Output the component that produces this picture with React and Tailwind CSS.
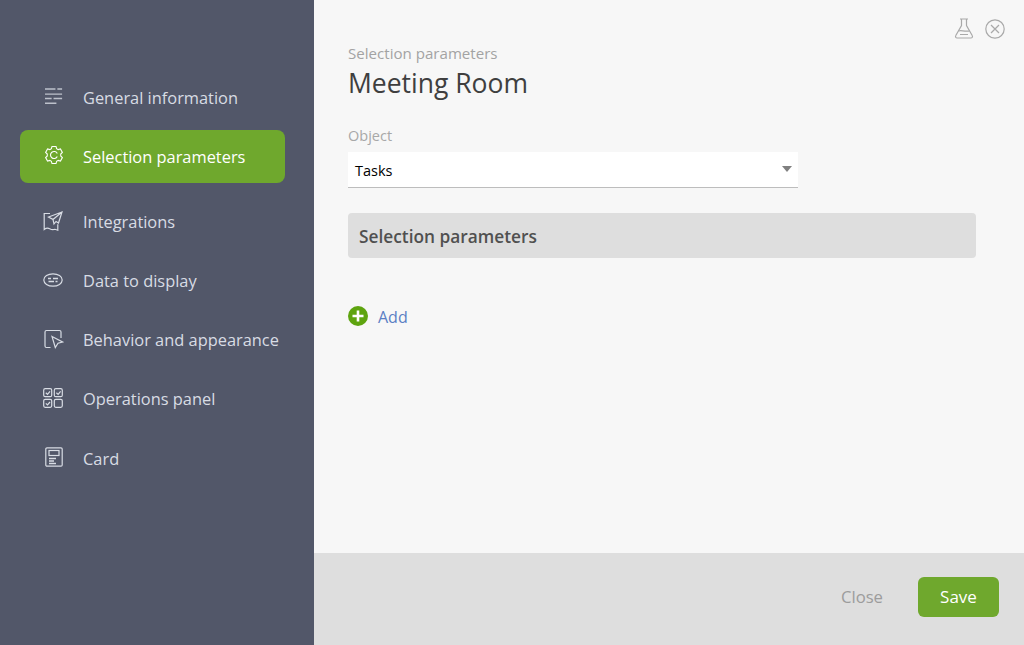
import React from 'react';

const stroke = { fill: 'none', stroke: 'currentColor', strokeWidth: 1.2 };

// sidebar icons, drawn on a 20x20 grid
const GeneralIcon = () => (
  <svg width="20" height="20" viewBox="0 0 20 20" {...stroke}>
    <path d="M0 1.500h11M13 1.500h5M0 7h18M0 11.500h7M9 11.500h9M0 16.500h12" strokeWidth="1.500" opacity="0.8" />
  </svg>
);

const GearIcon = () => (
  <svg width="22" height="22" viewBox="0 0 22 22" {...stroke}>
    <path d="M8.800 1.600h4.400l.7 2.500 1.700 1 2.500-.7 2.100 3.700-1.800 1.800v2.200l1.800 1.800-2.100 3.700-2.500-.7-1.700 1-.7 2.500H8.800l-.7-2.500-1.700-1-2.500.7-2.100-3.700 1.800-1.800V9.900L1.800 8.100l2.100-3.700 2.500.7 1.700-1z" />
    <path d="M14.600 12.600A3.900 3.900 0 1 1 14.600 9.400" />
  </svg>
);

const PlaneIcon = () => (
  <svg width="20" height="20" viewBox="0 0 20 20" {...stroke}>
    <path d="M7 2.500H1.200v16c2-1.600 3.600-1.800 5.500-.7 1.800 1 3.600 1.200 5.300.5l2.800.9v-6" />
    <path d="M19 1 5.500 6l4.500 2.500 1 4.500 2-2.500 2.500 1.500zM19 1 10 8.500" />
  </svg>
);

const BubbleIcon = () => (
  <svg width="20" height="16" viewBox="0 0 20 16" {...stroke}>
    <ellipse cx="10" cy="8" rx="9.200" ry="6.200" />
    <path d="M5 6.500h3M10 6.500h5M5.500 9.500h5.500M12.500 9.500h2" strokeWidth="1.400" />
  </svg>
);

const CursorIcon = () => (
  <svg width="20" height="20" viewBox="0 0 20 20" {...stroke}>
    <path d="M6.500 18.500H2.500a1.500 1.500 0 0 1-1.500-1.500V3a1.500 1.500 0 0 1 1.500-1.500h13A1.500 1.500 0 0 1 17 3v6" />
    <path d="M8 7.500 18.500 13l-4.500 1.200-2.700 4.300z" />
  </svg>
);

const ChecksIcon = () => (
  <svg width="20" height="20" viewBox="0 0 20 20" {...stroke}>
    <rect x="0.700" y="0.700" width="8" height="8" rx="1.500" />
    <rect x="11.300" y="0.700" width="8" height="8" rx="1.500" />
    <rect x="0.700" y="11.300" width="8" height="8" rx="1.500" />
    <rect x="11.300" y="11.300" width="8" height="8" rx="1.500" />
    <path d="m2.800 4.800 1.700 1.600 2.500-3M13.400 4.800l1.700 1.600 2.500-3M2.800 15.400 4.500 17l2.500-3" />
  </svg>
);

const CardIcon = () => (
  <svg width="18" height="20" viewBox="0 0 18 20" {...stroke}>
    <rect x="0.800" y="0.800" width="16.400" height="18.400" rx="1.200" />
    <rect x="4" y="3.500" width="10" height="5" />
    <path d="M4 11.500h7M4 14h5M4 16.500h7" strokeWidth="1.300" />
  </svg>
);

const navItems = [
  { label: 'General information', icon: <GeneralIcon />, iconBox: 'pl-[25px] pb-1', text: 'pl-[19px]' },
  { label: 'Selection parameters', icon: <GearIcon />, iconBox: 'pl-[24px] pb-1', text: 'pl-[19px] pt-0.5', active: true },
  { label: 'Integrations', icon: <PlaneIcon />, iconBox: 'pl-[23px] pb-1', text: 'pl-[19px]' },
  { label: 'Data to display', icon: <BubbleIcon />, iconBox: 'pl-[23px] pb-1', text: 'pl-[19px]' },
  { label: 'Behavior and appearance', icon: <CursorIcon />, iconBox: 'pl-[24px] pb-1', text: 'pl-[19px]' },
  { label: 'Operations panel', icon: <ChecksIcon />, iconBox: 'pl-[23px] pb-1', text: 'pl-[19px]' },
  { label: 'Card', icon: <CardIcon />, iconBox: 'pl-[25px] pb-1.5', text: 'pl-[19px]', extra: 'mt-px' },
];

function NavItem({ item }) {
  return (
    <div
      className={`flex h-[53px] items-center whitespace-nowrap rounded-lg text-[16.400px] ${
        item.active ? '-mt-px mb-[7px] bg-[#6fa82d] text-white' : 'text-[#d8dce4]'
      } ${item.extra || ''}`}
    >
      <div className={`flex w-[44px] shrink-0 items-center ${item.iconBox}`}>{item.icon}</div>
      <span className={item.text}>{item.label}</span>
    </div>
  );
}

export default function App() {
  return (
    <div className="flex h-[645px] w-[1024px] overflow-hidden font-['Open_Sans',sans-serif] bg-[#f7f7f7]">
      <aside className="flex w-[314px] shrink-0 flex-col gap-1.5 bg-[#525769] pl-5 pr-[29px] pt-[72px]">
        {navItems.map((item) => (
          <NavItem key={item.label} item={item} />
        ))}
      </aside>

      <div className="relative flex flex-1 flex-col">
        <div className="absolute right-[19px] top-[18px] flex items-center gap-[11px] text-[#a9a9a9]">
          <svg width="20" height="21" viewBox="0 0 20 21" {...stroke}>
            <path d="M6 1h8M7.500 1v6.500L1.800 17.500A1.600 1.600 0 0 0 3.200 20h13.600a1.600 1.600 0 0 0 1.400-2.500L12.500 7.500V1" />
            <path d="M4.500 13c3-1.500 5 1 11 0M6 16.500h8" />
          </svg>
          <svg width="20" height="20" viewBox="0 0 20 20" {...stroke}>
            <circle cx="10" cy="10" r="9.200" />
            <path d="m6 6 8 8M14 6l-8 8" />
          </svg>
        </div>

        <main className="flex-1 pl-[34px] pr-12 pt-[43px]">
          <div className="text-[15.100px] leading-[20px] text-[#a3a3a3]">Selection parameters</div>
          <h1 className="mt-px text-[26.500px] leading-[38px] text-[#3f3f3f]">Meeting Room</h1>

          <div className="mt-6 text-[14.500px] leading-[20px] text-[#a8a8a8]">Object</div>
          <div className="mt-1.5 flex h-9 w-[450px] items-center justify-between border-b border-[#bdbdbd] bg-white pl-[7px] pr-[6px] text-[14.500px] text-black">
            <span className="pt-0.5">Tasks</span>
            <span className="mb-0.5 h-0 w-0 border-x-[5px] border-t-[6px] border-x-transparent border-t-[#808080]" />
          </div>

          <div className="mt-[25px] flex h-[45px] items-center rounded-sm bg-[#dedede] pl-[11px] pt-0.5 text-[17.300px] font-semibold text-[#505050]">
            Selection parameters
          </div>

          <div className="mt-[44px] flex items-center gap-[10px]">
            <svg width="20" height="20" viewBox="0 0 20 20">
              <circle cx="10" cy="10" r="10" fill="#5ea40f" />
              <path d="M10 4.500v11M4.500 10h11" stroke="#fff" strokeWidth="2.600" />
            </svg>
            <span className="pt-[3px] text-[16px] text-[#5b7fc4]">Add</span>
          </div>
        </main>

        <footer className="flex h-[92px] items-center justify-end bg-[#dedede] pb-[4px] pr-[25px]">
          <span className="mr-[35px] text-[16.700px] text-[#9c9c9c]">Close</span>
          <button className="h-10 w-[81px] rounded-md bg-[#6fa82d] text-[17px] text-white">Save</button>
        </footer>
      </div>
    </div>
  );
}
